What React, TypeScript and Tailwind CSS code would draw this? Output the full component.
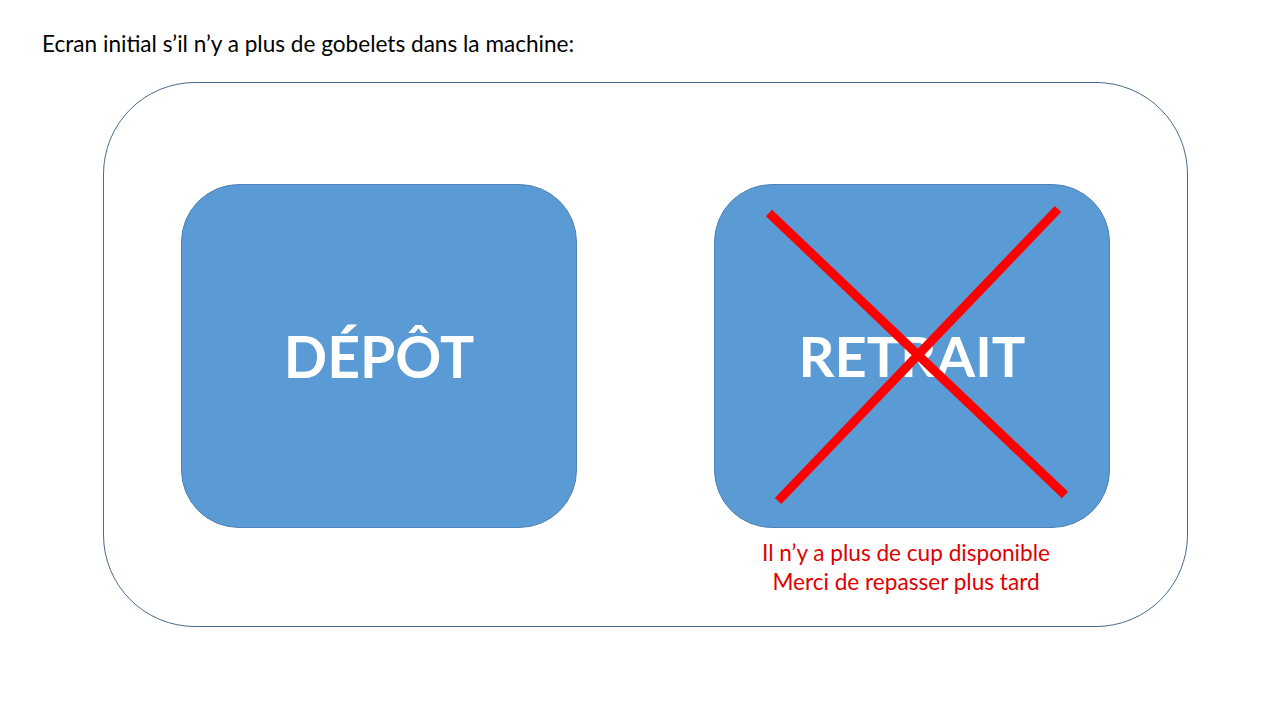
export default function App() {
  return (
    <div className="w-[1280px] h-[720px] bg-white overflow-hidden font-['Lato','Liberation_Sans',sans-serif]">
      <div className="pl-[42px] pt-[30px] h-[82px] text-[22.6px] leading-[28px] text-black">
        Ecran initial s’il n’y a plus de gobelets dans la machine:
      </div>

      <div className="ml-[103px] w-[1085px] h-[545px] rounded-[92px] border border-[#4a6a8f] flex items-start gap-[137px] pl-[77px] pt-[101px]">
        <div className="w-[396px] h-[344px] rounded-[58px] bg-[#5b9bd5] border border-[#4f82b5] flex items-center justify-center">
          <span className="text-white font-bold text-[57px] leading-none">DÉPÔT</span>
        </div>

        <div className="flex flex-col items-center">
          <div className="relative w-[396px] h-[344px] rounded-[58px] bg-[#5b9bd5] border border-[#4f82b5] flex items-center justify-center">
            <span className="text-white font-bold text-[56px] leading-none">RETRAIT</span>
            <svg className="absolute inset-0" width="396" height="344" viewBox="0 0 396 344">
              <line x1="54" y1="28" x2="350" y2="310" stroke="#ff0000" strokeWidth="9" />
              <line x1="343" y1="24" x2="63" y2="316" stroke="#ff0000" strokeWidth="9" />
            </svg>
          </div>
          <div className="mt-[10px] text-center text-[#e00000] text-[22.6px] leading-[29px] -ml-[12px]">
            <div>Il n’y a plus de cup disponible</div>
            <div>Merci de repasser plus tard</div>
          </div>
        </div>
      </div>
    </div>
  )
}
